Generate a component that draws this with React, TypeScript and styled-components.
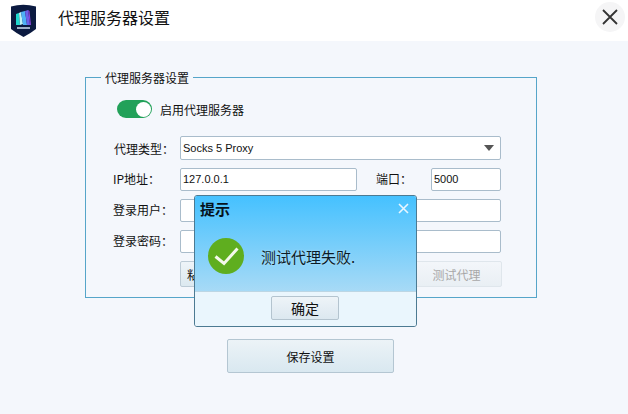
import React from "react";
import styled, { createGlobalStyle } from "styled-components";

const Global = createGlobalStyle`
  html, body { margin: 0; padding: 0; background: #f4f7fc; }
  body { font-family: "Noto Sans CJK SC", "Liberation Sans", sans-serif; color: #111; }
`;
const Page = styled.div`
  position: relative; width: 628px; height: 414px; overflow: hidden; background: #f4f7fc;
`;
const Header = styled.header`
  height: 41px; background: #fff; display: flex; align-items: center; padding: 0 3px 0 11px; box-sizing: border-box;
`;
const Title = styled.h1`
  margin: 0 0 0 22px; font-size: 16px; line-height: 22px; font-weight: 400; flex: 1; position: relative; top: -4px;
`;
const CloseButton = styled.button`
  width: 30px; height: 30px; border: 0; border-radius: 50%; background: #f5f5f6; padding: 0;
  display: flex; align-items: center; justify-content: center; position: relative; top: -4px;
`;
const Main = styled.main`
  display: flex; flex-direction: column; padding: 36px 0 0 85px;
`;
const Group = styled.section`
  width: 452px; height: 221px; box-sizing: border-box; margin: 0; border: 1px solid #55a5c9; padding: 0 35px 0 27px;
  position: relative;
`;
const Legend = styled.span`
  position: absolute; left: 15px; top: -8px; background: #f4f7fc; padding: 0 4px; font-size: 12px; line-height: 16px; color: #111;
`;
const ToggleRow = styled.div`
  display: flex; align-items: center; gap: 8px; margin: 21px 0 0 4px; height: 20px; font-size: 12px;
`;
const Toggle = styled.span`
  width: 35px; height: 18px; border-radius: 9px; background: #22a159; display: flex; justify-content: flex-end; align-items: center; padding-right: 1px; box-sizing: border-box;
`;
const Knob = styled.span`
  width: 15px; height: 15px; border-radius: 50%; background: #fff;
`;
const Row = styled.div<{ $top: number }>`
  display: flex; align-items: center; margin-top: ${(p) => p.$top}px;
`;
const Label = styled.label<{ $inset?: number; $lift?: number }>`
  width: 67px; flex: none; font-size: 12px; padding-left: ${(p) => p.$inset ?? 0}px;
  padding-bottom: ${(p) => p.$lift ?? 2}px; box-sizing: border-box; color: #111;
`;
const Field = styled.div<{ $w: number; $h?: number }>`
  width: ${(p) => p.$w}px; height: ${(p) => p.$h ?? 23}px; box-sizing: border-box; background: #fff;
  border: 1px solid #a9bccb; border-radius: 2px; display: flex; align-items: center; padding: 0 2px;
  font: 11px/1 "Liberation Sans", sans-serif; color: #111; flex: none;
`;
const Arrow = styled.span`
  margin-left: auto; margin-right: 4px; width: 0; height: 0; border-left: 5px solid transparent; border-right: 5px solid transparent; border-top: 6px solid #555;
`;
const PortLabel = styled.label`
  font-size: 12px; margin-left: 19px; width: 55px; flex: none; color: #111; padding-bottom: 2px; box-sizing: border-box;
`;
const ActionRow = styled.div`
  display: flex; justify-content: space-between; margin: 8px 0 0 67px; width: 322px;
`;
const ActionButton = styled.button<{ $disabled?: boolean; $w: number }>`
  width: ${(p) => p.$w}px; height: 26px; padding: 0; border-radius: 2px; font: 12px "Noto Sans CJK SC", sans-serif;
  border: 1px solid ${(p) => (p.$disabled ? "#dfe6ec" : "#bccbd6")};
  background: ${(p) => (p.$disabled ? "linear-gradient(#f3f6fa,#e9eff4)" : "linear-gradient(#eef4f8,#dce9f0)")};
  color: ${(p) => (p.$disabled ? "#a8a8a8" : "#111")};
`;
const SaveButton = styled.button`
  width: 167px; height: 34px; margin: 41px 0 0 142px; padding: 0; border: 1px solid #b4c6d2; border-radius: 2px;
  background: linear-gradient(#ecf3f7, #d9e8f0); font: 12px "Noto Sans CJK SC", sans-serif; color: #111;
`;
const Dialog = styled.div`
  position: absolute; left: 194px; top: 195px; width: 223px; height: 132px; box-sizing: border-box;
  border: 1px solid #4c7a92; border-radius: 3px; display: flex; flex-direction: column; overflow: hidden;
`;
const DialogBody = styled.div`
  height: 95px; background: linear-gradient(#45c1ff, #a7daf6); padding: 0 5px; box-sizing: border-box;
`;
const DialogHead = styled.div`
  display: flex; align-items: center; justify-content: space-between; height: 24px; padding-right: 2px;
`;
const DialogTitle = styled.span`
  font-size: 15px; font-weight: 700; color: #06121c;
`;
const DialogContent = styled.div`
  display: flex; align-items: center; gap: 17px; margin: 18px 0 0 8px;
`;
const Message = styled.span`
  font-size: 15px; color: #0b1b27; text-shadow: 0 0 2px #bfe9ff;
`;
const DialogFooter = styled.div`
  flex: 1; background: #eaf6fd; border-top: 1px solid #bcd6e4; display: flex; justify-content: center; padding: 4px 1px 0 0;
`;
const OkButton = styled.button`
  width: 68px; height: 24px; padding: 0; border: 1px solid #b4c4cf; border-radius: 2px;
  background: linear-gradient(#eef4f8, #dce8f0); font: 14px/1 "Noto Sans CJK SC", sans-serif; color: #111;
`;

const Logo = () => (
  <svg width="25" height="33" viewBox="0 0 25 33">
    <path d="M0 2.5 Q12 -1 25 2.5 V25 Q20 29 12.5 33 Q5 29 0 25 Z" fill="#0b1a40" />
    <path d="M5 10 L8 9 L9 21 L5 21 Z" fill="#1fd8d0" />
    <path d="M8 9 L10 8 L12 20 L9 21 Z" fill="#bff2f6" />
    <path d="M10 8 L14 7 L16 21 L12 21 Z" fill="#4fb0f5" />
    <path d="M14 7 L17 6 L19 21 L16 21 Z" fill="#6c5fe8" />
    <path d="M17 6 L18.5 7 L20 21 L19 21 Z" fill="#8a45d8" />
    <rect x="6" y="23" width="13" height="2" fill="#9fb0c8" />
  </svg>
);

export default function App() {
  return (
    <Page>
      <Global />
      <Header>
        <Logo />
        <Title>代理服务器设置</Title>
        <CloseButton aria-label="关闭">
          <svg width="16" height="16" viewBox="0 0 16 16">
            <path d="M1 1 L15 15 M15 1 L1 15" stroke="#333" strokeWidth="1.8" />
          </svg>
        </CloseButton>
      </Header>
      <Main>
        <Group>
          <Legend>代理服务器设置</Legend>
          <ToggleRow>
            <Toggle><Knob /></Toggle>
            启用代理服务器
          </ToggleRow>
          <Row $top={17}>
            <Label $inset={1} $lift={0}>代理类型：</Label>
            <Field $w={321} $h={24}>Socks 5 Proxy<Arrow /></Field>
          </Row>
          <Row $top={8}>
            <Label>IP地址：</Label>
            <Field $w={177}>127.0.0.1</Field>
            <PortLabel>端口：</PortLabel>
            <Field $w={70}>5000</Field>
          </Row>
          <Row $top={8}>
            <Label>登录用户：</Label>
            <Field $w={321} />
          </Row>
          <Row $top={8}>
            <Label>登录密码：</Label>
            <Field $w={321} />
          </Row>
          <ActionRow>
            <ActionButton $w={62}>粘贴代理</ActionButton>
            <ActionButton $w={91} $disabled>测试代理</ActionButton>
          </ActionRow>
        </Group>
        <SaveButton>保存设置</SaveButton>
      </Main>
      <Dialog>
        <DialogBody>
          <DialogHead>
            <DialogTitle>提示</DialogTitle>
            <svg width="11" height="11" viewBox="0 0 11 11">
              <path d="M1 1 L10 10 M10 1 L1 10" stroke="#e8f6ff" strokeWidth="1.6" />
            </svg>
          </DialogHead>
          <DialogContent>
            <svg width="36" height="36" viewBox="0 0 36 36">
              <circle cx="18" cy="18" r="18" fill="#5fae1f" />
              <path d="M7.5 18.5 L16 25.5 L29.5 10.5" fill="none" stroke="#f4f8ea" strokeWidth="3" />
            </svg>
            <Message>测试代理失败.</Message>
          </DialogContent>
        </DialogBody>
        <DialogFooter>
          <OkButton>确定</OkButton>
        </DialogFooter>
      </Dialog>
    </Page>
  );
}
